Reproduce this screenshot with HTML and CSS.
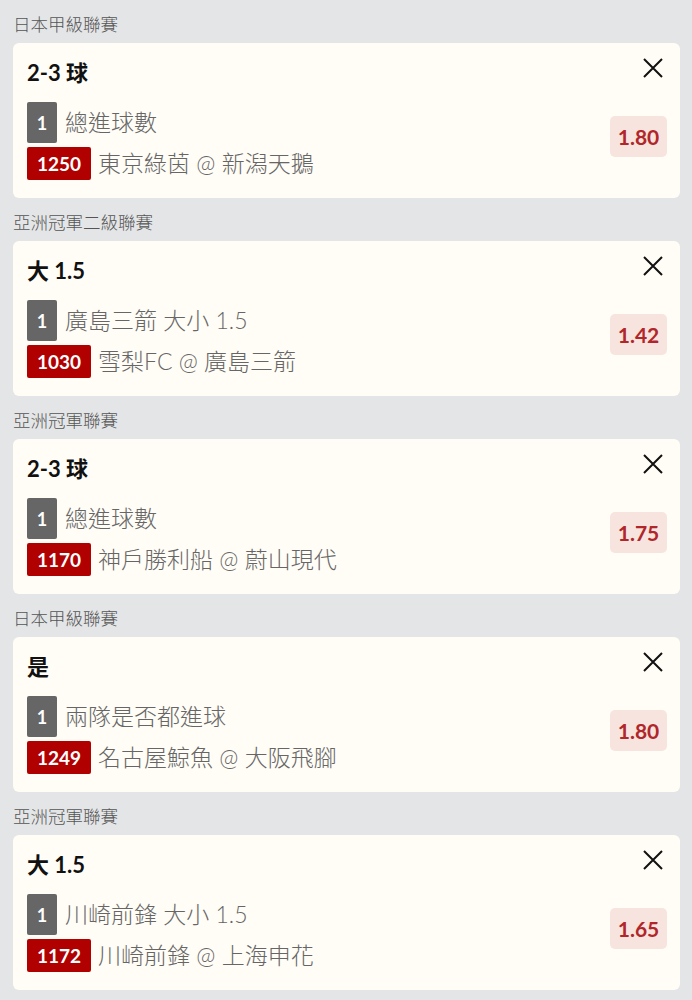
FILE: index.html
```html
<!DOCTYPE html>
<html lang="zh-Hant">
<head>
  <meta charset="UTF-8">
  <meta name="viewport" content="width=device-width, initial-scale=1.0">
  <title>投注單</title>
  <link rel="stylesheet" href="styles.css">
</head>
<body>

<div class="slip">

  <div class="league">日本甲級聯賽</div>
  <div class="bet">
    <div class="bet-head">
      <span class="pick">2-3 球</span>
      <svg class="close" width="20" height="20" viewBox="0 0 20 20"><path d="M1 1L19 19M19 1L1 19"/></svg>
    </div>
    <div class="bet-body">
      <div class="lines">
        <div class="line line-top"><span class="tag tag-gray">1</span><span class="txt">總進球數</span></div>
        <div class="line"><span class="tag tag-red">1250</span><span class="txt">東京綠茵 @ 新潟天鵝</span></div>
      </div>
      <div class="odds">1.80</div>
    </div>
  </div>

  <div class="league">亞洲冠軍二級聯賽</div>
  <div class="bet">
    <div class="bet-head">
      <span class="pick">大 1.5</span>
      <svg class="close" width="20" height="20" viewBox="0 0 20 20"><path d="M1 1L19 19M19 1L1 19"/></svg>
    </div>
    <div class="bet-body">
      <div class="lines">
        <div class="line line-top"><span class="tag tag-gray">1</span><span class="txt">廣島三箭 大小 1.5</span></div>
        <div class="line"><span class="tag tag-red">1030</span><span class="txt">雪梨FC @ 廣島三箭</span></div>
      </div>
      <div class="odds">1.42</div>
    </div>
  </div>

  <div class="league">亞洲冠軍聯賽</div>
  <div class="bet">
    <div class="bet-head">
      <span class="pick">2-3 球</span>
      <svg class="close" width="20" height="20" viewBox="0 0 20 20"><path d="M1 1L19 19M19 1L1 19"/></svg>
    </div>
    <div class="bet-body">
      <div class="lines">
        <div class="line line-top"><span class="tag tag-gray">1</span><span class="txt">總進球數</span></div>
        <div class="line"><span class="tag tag-red">1170</span><span class="txt">神戶勝利船 @ 蔚山現代</span></div>
      </div>
      <div class="odds">1.75</div>
    </div>
  </div>

  <div class="league">日本甲級聯賽</div>
  <div class="bet">
    <div class="bet-head">
      <span class="pick">是</span>
      <svg class="close" width="20" height="20" viewBox="0 0 20 20"><path d="M1 1L19 19M19 1L1 19"/></svg>
    </div>
    <div class="bet-body">
      <div class="lines">
        <div class="line line-top"><span class="tag tag-gray">1</span><span class="txt">兩隊是否都進球</span></div>
        <div class="line"><span class="tag tag-red">1249</span><span class="txt">名古屋鯨魚 @ 大阪飛腳</span></div>
      </div>
      <div class="odds">1.80</div>
    </div>
  </div>

  <div class="league">亞洲冠軍聯賽</div>
  <div class="bet">
    <div class="bet-head">
      <span class="pick">大 1.5</span>
      <svg class="close" width="20" height="20" viewBox="0 0 20 20"><path d="M1 1L19 19M19 1L1 19"/></svg>
    </div>
    <div class="bet-body">
      <div class="lines">
        <div class="line line-top"><span class="tag tag-gray">1</span><span class="txt">川崎前鋒 大小 1.5</span></div>
        <div class="line"><span class="tag tag-red">1172</span><span class="txt">川崎前鋒 @ 上海申花</span></div>
      </div>
      <div class="odds">1.65</div>
    </div>
  </div>

</div>

</body>
</html>
```

FILE: styles.css
```css
body {
  margin: 0;
  background: #e4e5e7;
  font-family: Lato, "Noto Sans CJK TC", sans-serif;
}
.slip {
  padding: 0 12px 12px 13px;
}
.league {
  height: 22px;
  padding-top: 14px;
  margin-bottom: 7px;
  line-height: 22px;
  font-size: 17.5px;
  font-weight: 300;
  color: #555;
}
.bet {
  background: #fffdf6;
  border-radius: 6px;
  padding: 15px 13px 18px 14px;
}
.bet-head {
  display: flex;
  justify-content: space-between;
  align-items: center;
  height: 30px;
}
.pick {
  font-size: 22px;
  line-height: 30px;
  font-weight: bold;
  color: #111;
}
.close {
  margin-right: 4px;
  margin-top: -10px;
}
.close path {
  stroke: #111;
  stroke-width: 2;
  fill: none;
}
.bet-body {
  display: flex;
  justify-content: space-between;
  align-items: center;
  margin-top: 14px;
}
.lines {
  display: flex;
  flex-direction: column;
  gap: 4px;
}
.line {
  display: flex;
  align-items: center;
  height: 33px;
}
.line-top {
  height: 41px;
}
.tag {
  display: flex;
  align-items: center;
  justify-content: center;
  color: white;
  font-weight: bold;
  border-radius: 2px;
}
.tag-gray {
  width: 30px;
  height: 41px;
  background: #666666;
  font-size: 18px;
}
.tag-red {
  height: 33px;
  padding: 0 10px;
  background: #b10000;
  font-size: 19px;
}
.txt {
  margin-left: 8px;
  font-size: 23px;
  line-height: 1;
  font-weight: 300;
  color: #666;
}
.tag-red + .txt {
  margin-left: 7px;
}
.odds {
  width: 57px;
  height: 41px;
  line-height: 41px;
  text-align: center;
  background: #f7e4de;
  border-radius: 5px;
  color: #b0262a;
  font-size: 21px;
  font-weight: bold;
  margin-bottom: 9px;
}
```
